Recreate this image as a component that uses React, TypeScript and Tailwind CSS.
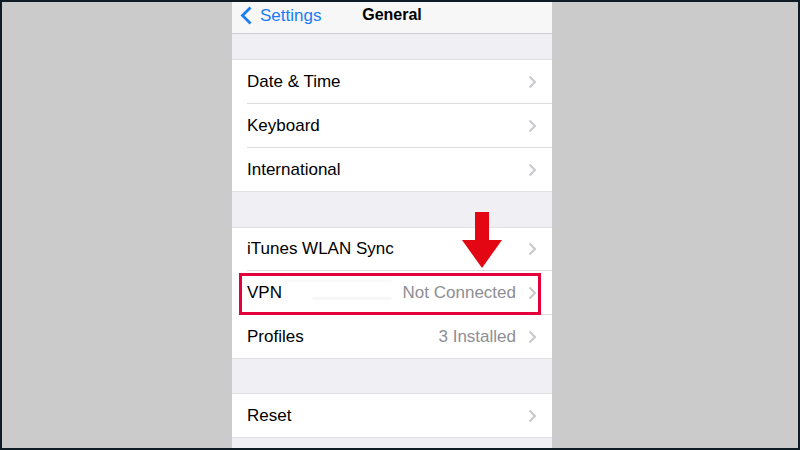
import type { ReactNode } from 'react';

type Row = { label: string; value?: string; h: string };

const groupOne: Row[] = [
    { label: 'Date & Time', h: 'h-[44px]' },
    { label: 'Keyboard', h: 'h-[44px]' },
    { label: 'International', h: 'h-[43px]' },
];

const Chevron = () => (
    <svg width="9" height="14" viewBox="0 0 9 14" className="shrink-0">
        <path d="M1.5 1.5 L7 7 L1.5 12.5" fill="none" stroke="#c7c7cc" strokeWidth="2" />
    </svg>
);

const SettingsRow = ({ row, last, children }: { row: Row; last?: boolean; children?: ReactNode }) => (
    <div className={`relative flex items-center pl-[15px] ${row.h}`}>
        <div className={`flex items-center flex-1 h-full pr-[15px] ${last ? '' : 'border-b border-[#dcdce0]'}`}>
            <span className="text-[17px] text-black">{row.label}</span>
            <span className="flex-1" />
            {row.value && <span className="text-[17px] text-[#8e8e93] mr-[12px]">{row.value}</span>}
            <Chevron />
        </div>
        {children}
    </div>
);

const Group = ({ children }: { children: ReactNode }) => (
    <div className="bg-white border-y border-[#e2e2e6]">{children}</div>
);

export default function App() {
    return (
        <div className="w-[800px] h-[450px] bg-[#0f1b25] p-[2px]" style={{ fontFamily: '"Liberation Sans", Arial, sans-serif' }}>
            <div className="w-full h-full bg-[#cbcbcb] pl-[230px] overflow-hidden">
                <div className="relative w-[320px] h-full bg-[#efeff4] flex flex-col">

                    {/* nav bar */}
                    <div className="h-[32px] bg-[#f7f7f8] border-b border-[#cfcfd3] flex items-start pt-[1px] relative">
                        <div className="flex items-center gap-[7px] pl-[8px] text-[#1a7cf5]">
                            <svg width="13" height="19" viewBox="0 0 13 19">
                                <path d="M10.5 1.5 L2.5 9.5 L10.5 17.5" fill="none" stroke="#1a7cf5" strokeWidth="2.8" />
                            </svg>
                            <span className="text-[17px]">Settings</span>
                        </div>
                        <span className="absolute left-0 right-0 top-[1px] text-center text-[16px] font-bold text-black">General</span>
                    </div>

                    <div className="h-[25px]" />
                    <Group>
                        {groupOne.map((r, i) => (
                            <SettingsRow key={r.label} row={r} last={i === groupOne.length - 1} />
                        ))}
                    </Group>

                    <div className="h-[35px]" />
                    <Group>
                        <SettingsRow row={{ label: 'iTunes WLAN Sync', h: 'h-[43px]' }} />
                        <SettingsRow row={{ label: 'VPN', value: 'Not Connected', h: 'h-[44px]' }}>
                            {/* smudged-out area */}
                            <div className="absolute left-[50px] top-[9px] w-[110px] h-[1px] bg-[#ececec] blur-[1px]" />
                            <div className="absolute left-[80px] top-[27px] w-[80px] h-[1px] bg-[#e6e6e6] blur-[1px]" />
                            {/* highlight box */}
                            <div className="absolute left-[7px] right-[11px] top-[2px] bottom-[0px] border-[3px] border-[#e4003a]" />
                        </SettingsRow>
                        <SettingsRow row={{ label: 'Profiles', value: '3 Installed', h: 'h-[43px]' }} last />
                    </Group>

                    <div className="h-[34px]" />
                    <Group>
                        <SettingsRow row={{ label: 'Reset', h: 'h-[43px]' }} last />
                    </Group>

                    {/* pointer arrow */}
                    <svg width="40" height="56" viewBox="0 0 40 56" className="absolute left-[230px] top-[210px]">
                        <rect x="13" y="0" width="14" height="29" fill="#e30613" />
                        <polygon points="0,28 40,28 20,56" fill="#e30613" />
                    </svg>
                </div>
            </div>
        </div>
    );
}
